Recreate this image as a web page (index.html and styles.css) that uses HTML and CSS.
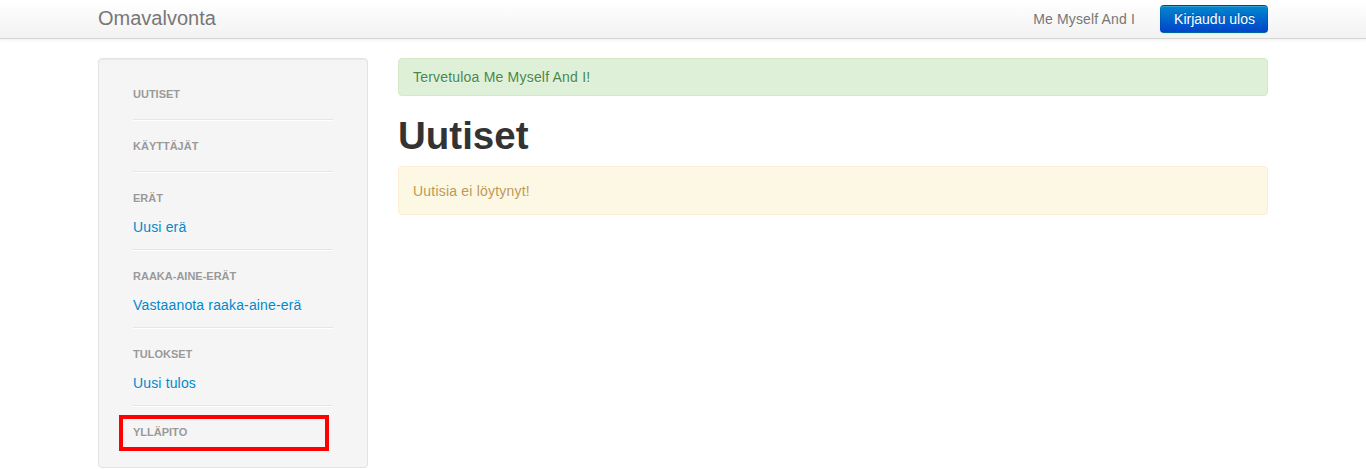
FILE: index.html
```html
<!DOCTYPE html>
<html lang="fi">
<head>
<meta charset="utf-8">
<title>Omavalvonta</title>
<link rel="stylesheet" href="styles.css">
</head>
<body>
<header class="navbar">
  <div class="container navbar-inner">
    <a class="brand" href="#">Omavalvonta</a>
    <div class="navbar-right">
      <span class="user-name">Me Myself And I</span>
      <a class="btn-primary" href="#">Kirjaudu ulos</a>
    </div>
  </div>
</header>
<div class="container main">
  <aside class="well">
    <ul class="nav-list">
      <li class="nav-header">Uutiset</li>
      <li class="divider"></li>
      <li class="nav-header">Käyttäjät</li>
      <li class="divider"></li>
      <li class="nav-header">Erät</li>
      <li class="nav-link"><a href="#">Uusi erä</a></li>
      <li class="divider"></li>
      <li class="nav-header">Raaka-aine-erät</li>
      <li class="nav-link"><a href="#">Vastaanota raaka-aine-erä</a></li>
      <li class="divider"></li>
      <li class="nav-header">Tulokset</li>
      <li class="nav-link"><a href="#">Uusi tulos</a></li>
      <li class="divider"></li>
      <li class="nav-header highlighted">Ylläpito</li>
    </ul>
  </aside>
  <section class="content">
    <div class="alert alert-success">Tervetuloa Me Myself And I!</div>
    <h1 class="page-title">Uutiset</h1>
    <div class="alert alert-warning">Uutisia ei löytynyt!</div>
  </section>
</div>
</body>
</html>
```
FILE: styles.css
```css
* { box-sizing: border-box; }
html, body { margin: 0; padding: 0; }
body {
  font-family: "Liberation Sans", Arial, Helvetica, sans-serif;
  font-size: 14px;
  line-height: 20px;
  color: #333;
  background: #fff;
}
a { text-decoration: none; }
.container {
  width: 1170px;
  margin: 0 auto;
}
.navbar {
  height: 39px;
  background: linear-gradient(to bottom, #ffffff, #f2f2f2);
  border-bottom: 1px solid #d4d4d4;
  box-shadow: 0 1px 4px rgba(0,0,0,0.065);
}
.navbar-inner {
  height: 38px;
  display: flex;
  align-items: center;
  justify-content: space-between;
}
.brand {
  font-size: 20px;
  line-height: 20px;
  color: #777;
  margin-top: -2px;
}
.navbar-right {
  display: flex;
  align-items: center;
  gap: 25px;
}
.user-name {
  color: #777;
  margin-top: -1px;
  letter-spacing: 0.15px;
}
.btn-primary {
  display: block;
  height: 28px;
  padding: 3px 12px 3px 13px;
  line-height: 20px;
  color: #fff;
  text-shadow: 0 -1px 0 rgba(0,0,0,0.25);
  background: linear-gradient(to bottom, #0088cc, #0044cc);
  border: 1px solid #0044cc;
  border-color: rgba(0,0,0,0.1) rgba(0,0,0,0.1) rgba(0,0,0,0.25);
  border-radius: 4px;
  box-shadow: inset 0 1px 0 rgba(255,255,255,0.2), 0 1px 2px rgba(0,0,0,0.05);
  margin-top: -1px;
}
.main {
  display: flex;
  gap: 30px;
  padding-top: 19px;
  align-items: flex-start;
}
.well {
  width: 270px;
  flex: none;
  background: #f5f5f5;
  border: 1px solid #e3e3e3;
  border-radius: 4px;
  box-shadow: inset 0 1px 1px rgba(0,0,0,0.05);
  padding: 19px;
}
.nav-list {
  list-style: none;
  margin: 0;
  padding: 0 15px;
  display: flex;
  flex-direction: column;
}
.nav-header {
  position: relative;
  padding: 3px 0;
  margin: 3px 0;
  font-size: 11px;
  font-weight: bold;
  line-height: 20px;
  color: #999;
  text-transform: uppercase;
  text-shadow: 0 1px 0 rgba(255,255,255,0.5);
}
.nav-link a {
  display: block;
  padding: 3px 0;
  color: #0088cc;
  letter-spacing: 0.15px;
  text-shadow: 0 1px 0 rgba(255,255,255,0.5);
}
.divider {
  height: 2px;
  margin: 9px 0;
  background: #e5e5e5;
  border-bottom: 1px solid #fff;
}
.highlighted::after {
  content: "";
  position: absolute;
  left: -14px;
  right: 4px;
  top: -4px;
  bottom: -6px;
  border: 4px solid #ff0000;
}
.content {
  width: 870px;
  flex: none;
}
.alert {
  border: 1px solid;
  border-radius: 4px;
  letter-spacing: 0.2px;
  text-shadow: 0 1px 0 rgba(255,255,255,0.5);
}
.alert-success {
  padding: 8px 14px;
  background: #dff0d8;
  border-color: #d6e9c6;
  color: #468847;
  margin-bottom: 20px;
}
.alert-warning {
  padding: 14px 14px 13px;
  background: #fcf8e3;
  border-color: #fbeed5;
  color: #c09853;
}
.page-title {
  margin: 10px 0;
  font-size: 38.5px;
  line-height: 40px;
  font-weight: bold;
  color: #333;
}
```
